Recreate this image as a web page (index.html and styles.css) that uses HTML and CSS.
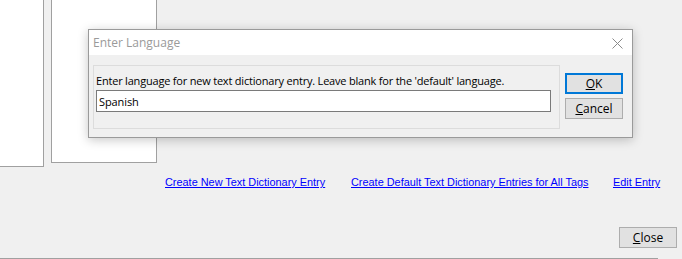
FILE: index.html
```html
<!DOCTYPE html>
<html lang="en">
<head>
  <meta charset="UTF-8" />
  <title>Enter Language</title>
  <link rel="stylesheet" href="styles.css">
</head>
<body>
  <div class="window">
    <div class="panels">
      <div class="panel panel-list"></div>
      <div class="panel panel-preview"></div>
    </div>

    <div class="links">
      <a href="#" class="link-new">Create New Text Dictionary Entry</a>
      <a href="#" class="link-default">Create Default Text Dictionary Entries for All Tags</a>
      <a href="#" class="link-edit">Edit Entry</a>
    </div>

    <div class="footer">
      <button class="btn btn-close"><u>C</u>lose</button>
    </div>
    <div class="bottom-line"></div>

    <!-- modal dialog over the main window -->
    <div class="dialog">
      <div class="dialog-title">
        <span>Enter Language</span>
        <svg class="x-icon" width="11" height="11" viewBox="0 0 11 11">
          <path d="M0.5 0.5 L10.5 10.5 M10.5 0.5 L0.5 10.5" stroke="#8a8a8a" stroke-width="1" fill="none"/>
        </svg>
      </div>
      <div class="dialog-body">
        <div class="group">
          <label for="lang">Enter language for new text dictionary entry. Leave blank for the 'default' language.</label>
          <input type="text" id="lang" value="Spanish" />
        </div>
        <div class="dialog-buttons">
          <button class="btn btn-ok"><u>O</u>K</button>
          <button class="btn"><u>C</u>ancel</button>
        </div>
      </div>
    </div>
  </div>
</body>
</html>
```

FILE: styles.css
```css
* { box-sizing: border-box; }
body {
  margin: 0;
  background: #f0f0f0;
  font-family: 'Liberation Sans', Tahoma, sans-serif;
  font-size: 11px;
  color: #000;
}
.window {
  position: relative;
  width: 682px;
  height: 259px;
  overflow: hidden;
}
.panels {
  display: flex;
  align-items: flex-start;
  gap: 7px;
  margin-top: -1px;
  margin-left: -1px;
}
.panel {
  background: #fff;
  border: 1px solid #a0a0a0;
}
.panel-list { width: 45px; height: 168px; }
.panel-preview { width: 106px; height: 164px; }
.links {
  display: flex;
  margin-top: 8px;
  height: 14px;
  line-height: 14px;
  font-size: 10.9px;
}
.links a {
  color: #0000ff;
  text-decoration: underline;
  white-space: nowrap;
}
.link-new { margin-left: 165px; width: 186px; }
.link-default { width: 262px; }
.footer {
  display: flex;
  justify-content: flex-end;
  padding-right: 5px;
  margin-top: 38px;
}
.btn {
  font-family: 'Open Sans', 'Segoe UI', sans-serif;
  font-size: 12px;
  width: 58px;
  height: 21px;
  padding: 0;
  line-height: 17px;
  background: #e1e1e1;
  border: 1px solid #adadad;
  color: #000;
}
.bottom-line {
  margin-top: 10px;
  height: 1px;
  width: 658px;
  background: #a0a0a0;
}
.dialog {
  position: absolute;
  left: 88px;
  top: 29px;
  width: 545px;
  height: 109px;
  border: 1px solid #9a9a9a;
  background: #f0f0f0;
  box-shadow: 0 2px 10px rgba(0, 0, 0, 0.22);
  font-family: 'Open Sans', 'Segoe UI', sans-serif;
  font-size: 12px;
}
.dialog-title {
  display: flex;
  justify-content: space-between;
  align-items: center;
  height: 25px;
  background: #fff;
  padding: 0 9px 0 4px;
  color: #9a9a9a;
}
.x-icon { margin-top: 1px; }
.dialog-body {
  display: flex;
  padding: 10px 8px 0 4px;
  gap: 5px;
}
.group {
  width: 467px;
  height: 64px;
  border: 1px solid #dcdcdc;
  padding: 7px 0 0 2px;
}
.group label {
  display: block;
  font-size: 11px;
  letter-spacing: -0.2px;
  line-height: 16px;
  white-space: nowrap;
}
.group input {
  display: block;
  margin-top: 1px;
  width: 455px;
  height: 22px;
  border: 1px solid #7a7a7a;
  padding: 0 2px;
  font-family: inherit;
  font-size: 11px;
  letter-spacing: -0.1px;
  background: #fff;
}
.dialog-buttons {
  display: flex;
  flex-direction: column;
  gap: 4px;
  margin-top: 8px;
}
.btn-ok {
  border: 2px solid #0078d7;
}
```
